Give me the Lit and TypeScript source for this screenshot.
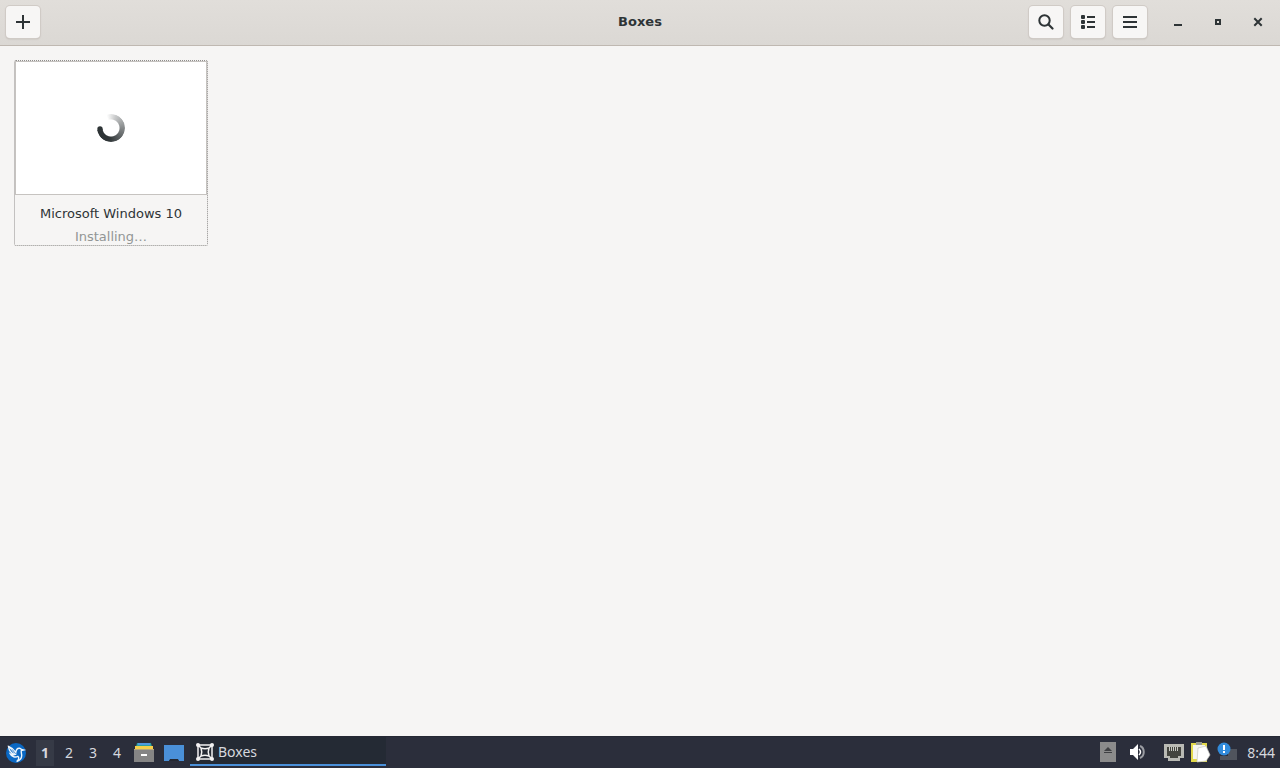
import { LitElement, html, css, svg } from "lit";
import { customElement, state } from "lit/decorators.js";

@customElement("boxes-header")
class BoxesHeader extends LitElement {
  static styles = css`
    :host {
      display: grid;
      grid-template-columns: 1fr auto 1fr;
      align-items: center;
      box-sizing: border-box;
      height: 46px;
      padding: 0 6px 2px;
      background: linear-gradient(#e1deda, #dbd8d4);
      border-bottom: 1px solid #bfb8b1;
      color: #2e3436;
      font: 13px/16px "DejaVu Sans", sans-serif;
    }
    .title {
      margin: 0;
      font-size: 13px;
      font-weight: bold;
    }
    .start,
    .end,
    .windowing {
      display: flex;
      align-items: center;
    }
    .end {
      justify-content: flex-end;
      gap: 8px;
    }
    button {
      display: grid;
      place-items: center;
      box-sizing: border-box;
      width: 34px;
      height: 32px;
      padding: 0;
      border: 0;
      border-radius: 4px;
      background: #f7f6f5;
      box-shadow: 0 0 0 1px #d0cbc6, 0 1px 2px #b8b2ab;
      color: #2e3436;
    }
    .windowing {
      gap: 8px;
      margin-left: 7px;
    }
    .windowing button {
      width: 32px;
      background: none;
      box-shadow: none;
    }
    svg {
      display: block;
    }
  `;

  render() {
    return html`
      <div class="start">
        <button aria-label="New box">
          <svg width="16" height="16" viewBox="0 0 16 16"><path d="M7 1h2v6h6v2H9v6H7V9H1V7h6z" fill="currentColor" /></svg>
        </button>
      </div>
      <h1 class="title">Boxes</h1>
      <div class="end">
        <button aria-label="Search">
          <svg width="16" height="16" viewBox="0 0 16 16" fill="none" stroke="currentColor" stroke-width="2">
            <circle cx="6.5" cy="6.5" r="5.2" />
            <path d="M10.5 10.5l4 4" stroke-width="2.2" stroke-linecap="round" />
          </svg>
        </button>
        <button aria-label="List view">
          <svg width="16" height="16" viewBox="0 0 16 16" fill="currentColor">
            <rect x="1" y="1" width="4" height="4" rx="1" /><rect x="1" y="6" width="4" height="4" rx="1" /><rect x="1" y="11" width="4" height="4" rx="1" />
            <path d="M7 2h8v2H7zM7 7h8v2H7zM7 12h8v2H7z" />
          </svg>
        </button>
        <button aria-label="Menu">
          <svg width="16" height="16" viewBox="0 0 16 16"><path d="M1 2h14v2H1zM1 7h14v2H1zM1 12h14v2H1z" fill="currentColor" /></svg>
        </button>
        <div class="windowing">
          <button aria-label="Minimize">
            <svg width="16" height="16" viewBox="0 0 16 16"><path d="M4 10h8v2H4z" fill="currentColor" /></svg>
          </button>
          <button aria-label="Maximize">
            <svg width="16" height="16" viewBox="0 0 16 16"><path d="M5 5h6v6H5zM7 7v2h2V7z" fill="currentColor" fill-rule="evenodd" /></svg>
          </button>
          <button aria-label="Close">
            <svg width="16" height="16" viewBox="0 0 16 16"><path d="M4.300 4.300l7.400 7.400M11.700 4.300l-7.400 7.400" stroke="currentColor" stroke-width="2" /></svg>
          </button>
        </div>
      </div>
    `;
  }
}

@customElement("box-card")
class BoxCard extends LitElement {
  static properties = { name: {}, status: {} };
  declare name: string;
  declare status: string;

  static styles = css`
    :host {
      display: block;
      box-sizing: border-box;
      width: 194px;
      border: 1px dotted #8f8d8b;
      border-radius: 2px;
      color: #2e3436;
      text-align: center;
      font: 13px/16px "DejaVu Sans", sans-serif;
    }
    .screen {
      display: grid;
      place-items: center;
      box-sizing: border-box;
      height: 134px;
      background: #fff;
      border: 1px solid #c6c3c0;
    }
    .spinner {
      display: block;
      width: 28px;
      height: 28px;
    }
    .ring {
      width: 28px;
      height: 28px;
      border-radius: 50%;
      background: conic-gradient(from -20deg, #2e343600, #2e343640 40deg, #2e3436a0 120deg, #2e3436 210deg, #2e3436 280deg, transparent 280deg);
      mask: radial-gradient(circle, transparent 8px, #000 9px);
    }
    .name {
      margin: 11px 0 0;
    }
    .status {
      margin: 7px 0 0;
      color: #929595;
    }
  `;

  render() {
    return html`
      <div class="screen">
        <svg class="spinner" viewBox="0 0 28 28" role="img" aria-label="Working">
          <foreignObject width="28" height="28"><div class="ring"></div></foreignObject>
          <circle cx="3" cy="15" r="2.700" fill="#2e3436" />
        </svg>
      </div>
      <p class="name">${this.name}</p>
      <p class="status">${this.status}</p>
    `;
  }
}

const lubuntu = svg`
  <circle cx="11" cy="11" r="10" fill="#0a68c4" />
  <path d="M3.500 4.500c3 1.200 5.500 3 7.300 6 .3-2.500 1.700-4.500 3.700-4.300 1 .1 1.500.7 2 1.300l2 .5-2.200.6c-.4 1.700.4 3 .4 5 0 2.700-2 4.900-5 6 2.200-2 2.700-4.200 1.200-5.200-2.500 1.300-6.200.5-7.600-2.500 1.400.8 3 1 4.300.6C6.500 11.500 4 8.500 3.500 4.500z" fill="none" stroke="#eef5fb" stroke-width="1.400" />
  <path d="M5 6l6 7" stroke="#eef5fb" />
`;
const files = svg`
  <path d="M4 1h14l1 4H3z" fill="#2fa0a0" />
  <path d="M5 1h12v2H5z" fill="#4e9ae0" />
  <path d="M2 4h18v4H2z" fill="#f5cf4b" />
  <path d="M1 7h20v13H1z" fill="#858585" />
  <path d="M1 7h20v1H1z" fill="#b5a67b" />
  <rect x="8" y="12" width="6" height="2" fill="#fff" />
`;
const desktop = svg`
  <path d="M1 3h20v16h-5l-1-1H7l-1 1H1z" fill="#4a90d9" />
  <path d="M6 19l1-2h8l1 2z" fill="#242730" />
`;
const frame = svg`
  <g fill="none" stroke="#f2f2f2" stroke-width="1.500">
    <path d="M3 3h14v14H3zM6 6q4 1.500 8 0-1.500 4 0 8-4-1.500-8 0 1.500-4 0-8zM3 3l3 3M17 3l-3 3M3 17l3-3M17 17l-3-3" />
  </g>
  <g fill="#f2f2f2"><circle cx="3" cy="3" r="2" /><circle cx="17" cy="3" r="2" /><circle cx="3" cy="17" r="2" /><circle cx="17" cy="17" r="2" /></g>
`;
const eject = svg`
  <path d="M3 0h16v20H3z" fill="#8b8b8b" />
  <path d="M11 5l4 4H7zM7 10h8v1H7z" fill="#3f4043" />
`;
const volume = svg`
  <path d="M4 7h3l5-5v16l-5-5H4z" fill="#fff" />
  <path d="M13 7q3 3 0 6" fill="none" stroke="#fff" stroke-width="1.500" />
  <path d="M14 4c5 2 5 10 0 12" fill="none" stroke="#9b9da2" stroke-width="2" />
`;
const network = svg`
  <path d="M1 2h20v14h-4v3H5v-3H1z" fill="#b9bab4" />
  <path d="M4 5h14v9h-3v2H7v-2H4z" fill="#44453f" />
  <path d="M6.500 5v4M8.500 5v4M10.500 5v4M12.500 5v4M14.500 5v4" stroke="#c9cac4" />
`;
const clipboard = svg`
  <path d="M1 1h16v19H1z" fill="#e3d94c" />
  <path d="M3 3h12v14H3z" fill="#f5f5ef" />
  <path d="M6 0h6v3H6z" fill="#999b90" />
  <path d="M8 6l8-2 4 9-4 6-9 1z" fill="#fff" stroke="#c8c8c2" stroke-width=".7" />
`;
const updates = svg`
  <path d="M11 7h9v11h-9zM3 14h12v4H3z" fill="#50545d" />
  <circle cx="7" cy="7" r="6.500" fill="#318bdb" />
  <path d="M6 3h2v5H6zM6 9h2v2H6z" fill="#fff" />
`;

const icon = (content: unknown, size = 22) =>
  html`<svg width=${size} height=${size} viewBox="0 0 ${size} ${size}" aria-hidden="true">${content}</svg>`;

@customElement("task-bar")
class TaskBar extends LitElement {
  @state() private current = 1;

  static styles = css`
    :host {
      display: flex;
      align-items: center;
      box-sizing: border-box;
      height: 32px;
      padding: 0 5px;
      background: #2b2e3b;
      border-top: 1px solid #252834;
      color: #d6d8df;
      font: 14px/20px "Noto Sans", sans-serif;
    }
    button {
      display: grid;
      place-items: center;
      padding: 0;
      border: 0;
      background: none;
      color: inherit;
      font: inherit;
    }
    svg {
      display: block;
    }
    .pager {
      display: flex;
      gap: 6px;
      margin: 0 7px 0 9px;
    }
    .pager button {
      width: 18px;
      height: 26px;
    }
    .pager .current {
      background: #363a46;
      font-weight: bold;
    }
    .launchers {
      display: flex;
      gap: 8px;
      margin-right: 5px;
    }
    .task {
      display: flex;
      align-items: center;
      align-self: flex-start;
      gap: 3px;
      box-sizing: border-box;
      width: 196px;
      height: 29px;
      padding: 2px 5px 0;
      background: #242a34;
      border-bottom: 2px solid #4a90d9;
    }
    .tray {
      display: flex;
      align-items: center;
      margin-left: auto;
      gap: 5px;
    }
    .tray .volume {
      margin: 0 10px 0 2px;
    }
    .clock {
      margin-left: 3px;
    }
  `;

  render() {
    return html`
      <button aria-label="Applications">${icon(lubuntu)}</button>
      <div class="pager">
        ${[1, 2, 3, 4].map(
          (n) => html`<button class=${n === this.current ? "current" : ""} @click=${() => (this.current = n)}>${n}</button>`
        )}
      </div>
      <div class="launchers">
        <button aria-label="Files">${icon(files)}</button>
        <button aria-label="Show desktop">${icon(desktop)}</button>
      </div>
      <button class="task">${icon(frame, 20)}<span>Boxes</span></button>
      <div class="tray">
        <button aria-label="Removable media">${icon(eject)}</button>
        <button class="volume" aria-label="Volume">${icon(volume)}</button>
        <button aria-label="Network">${icon(network)}</button>
        <button aria-label="Clipboard">${icon(clipboard)}</button>
        <button aria-label="Updates">${icon(updates)}</button>
        <time class="clock">8:44</time>
      </div>
    `;
  }
}

@customElement("app-root")
class AppRoot extends LitElement {
  static styles = css`
    :host {
      display: flex;
      flex-direction: column;
      min-height: 100vh;
      background: #f6f5f4;
    }
    .collection {
      display: flex;
      flex-wrap: wrap;
      align-content: flex-start;
      flex: 1;
      gap: 14px;
      padding: 14px;
    }
  `;

  render() {
    return html`
      <boxes-header></boxes-header>
      <main class="collection">
        <box-card name="Microsoft Windows 10" status="Installing…"></box-card>
      </main>
      <task-bar></task-bar>
    `;
  }
}
